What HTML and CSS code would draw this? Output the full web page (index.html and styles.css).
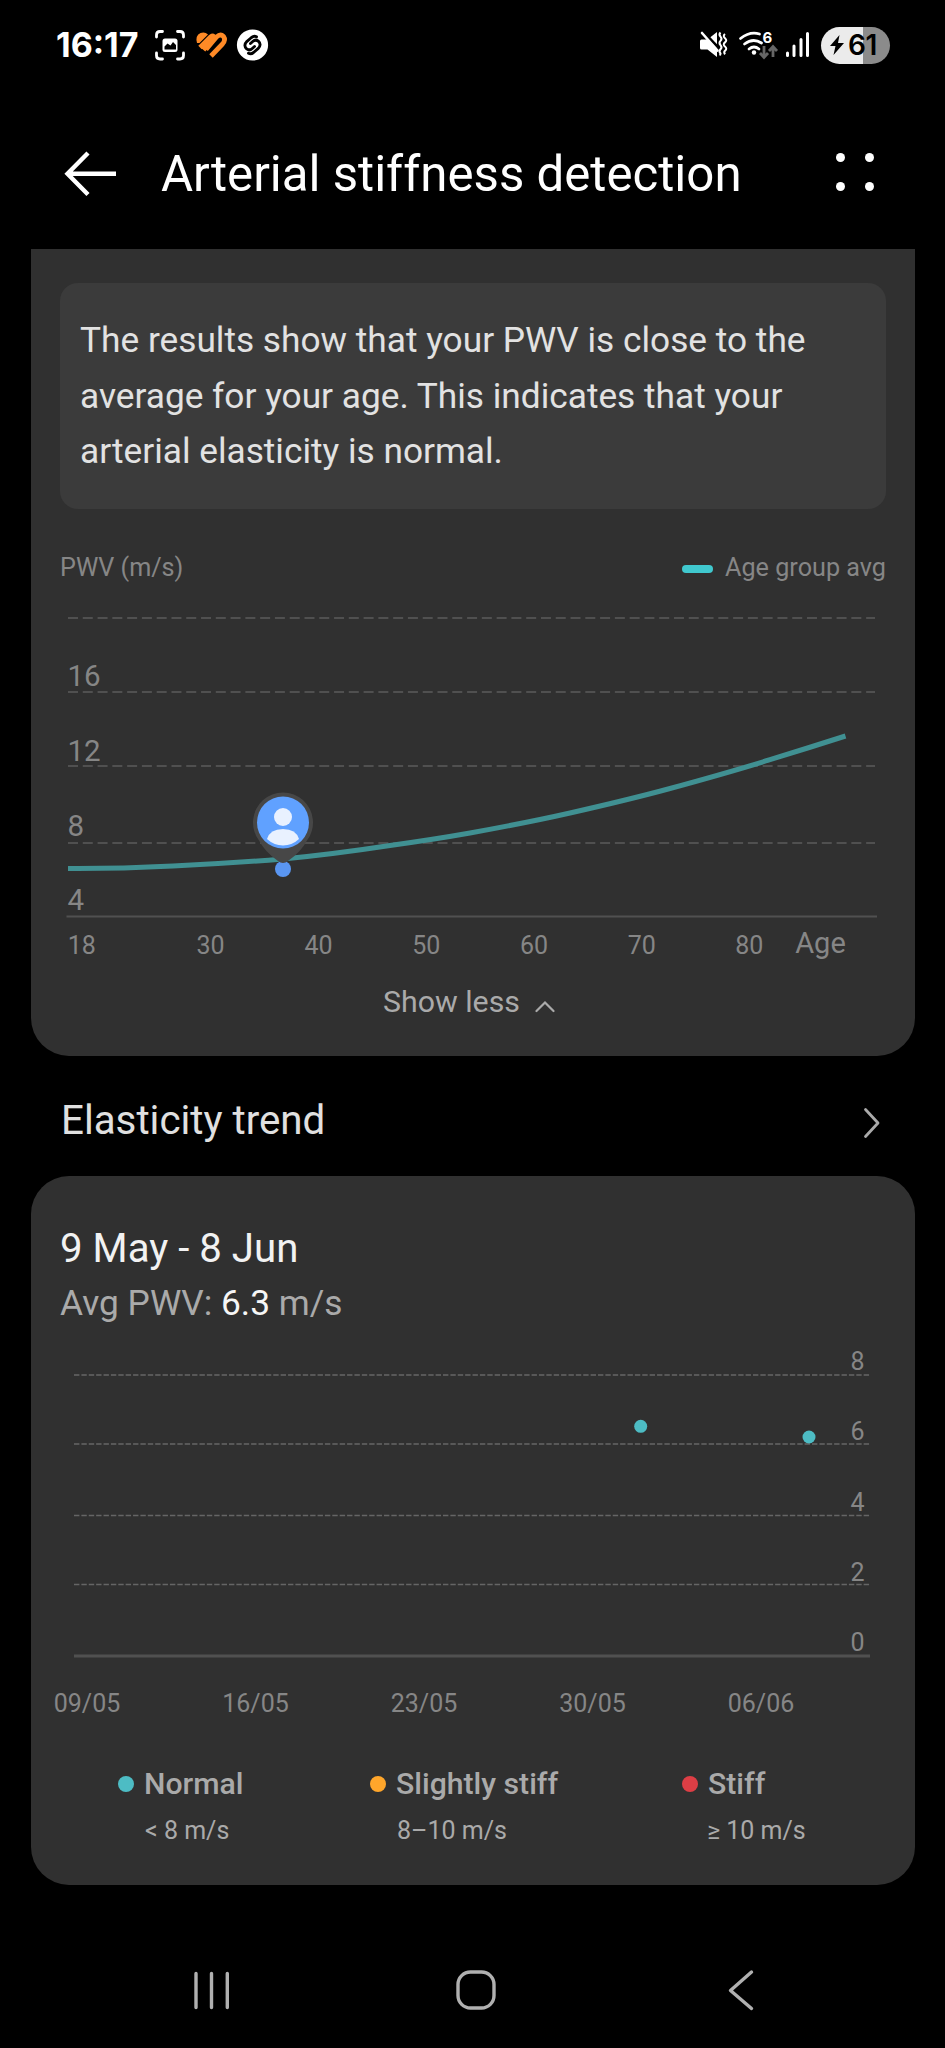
FILE: index.html
```html
<!DOCTYPE html>
<html lang="en">
<head>
<meta charset="utf-8">
<title>Arterial stiffness detection</title>
<link rel="stylesheet" href="styles.css">
</head>
<body>
<div class="screen">
  <div class="status">
    <span class="clock">16:17</span>
    <svg class="notif" width="120" height="36" viewBox="150 27 120 36" aria-hidden="true">
      <g fill="none" stroke="#fff" stroke-width="2.8" stroke-linecap="round">
        <path d="M156.500 37v-2q0-3.500 3.500-3.500h2.500M177.500 31.500h2.500q3.500 0 3.500 3.500v2M183.500 53v2.500q0 3.500-3.500 3.500h-2.500M162.500 59H160q-3.500 0-3.500-3.500V53"/>
      </g>
      <rect x="162.500" y="38.500" width="15" height="13.500" rx="2.500" fill="#fff"/>
      <path d="M164.500 49.500v-3l3-3 3 2 2.500-3.500 3 3v4.500z" fill="#000"/>
      <path d="M197 43Q195 35.500 200.500 33q4.500-1.500 7.500 1.500L199.500 43z" fill="#ff8a26"/>
      <g fill="none" stroke="#ff8a26" stroke-width="4.800" stroke-linejoin="round">
        <path d="M200 47.500l10.500-10.500q3.500-2.500 4 1L203.500 50"/>
        <path d="M206 49.500L216.500 37q4-3.500 7-.5 2.500 3.500-1 7.500L211 56"/>
      </g>
      <circle cx="252.500" cy="45" r="15.600" fill="#fff"/>
      <g fill="none" stroke="#000" stroke-width="2.900" stroke-linecap="round" stroke-linejoin="round">
        <path d="M256.500 36.800Q254 35.500 251.500 37.500L247 41.300Q243 45.500 246.700 48.800 249.500 51 252 48.700L254.500 46.500"/>
        <path d="M248.500 53.200Q251 54.500 253.500 52.500L258 48.700Q262 44.500 258.300 41.200 255.500 39 253 41.300L250.500 43.500"/>
      </g>
    </svg>
    <svg class="signals" width="112" height="36" viewBox="698 27 112 36" aria-hidden="true">
      <path d="M700 41q0-1.500 1.500-1.500h6L717 32v25l-9.500-7.500h-6Q700 49.500 700 48z" fill="#fff"/>
      <path d="M702.500 31L719 48.500" stroke="#000" stroke-width="3"/>
      <path d="M702 33l15.500 17.500" stroke="#fff" stroke-width="2.600" stroke-linecap="round"/>
      <path d="M720.500 32.500q-2 2 0 4.200t0 4.200q-2 2 0 4.200t0 4.200q-2 2 0 4.200l-.5 2M725 34q-2.500 2 0 4.200t0 4.200q-2.500 2 0 4.200t0 4.200q-1.500 1.500 0 3.500" fill="none" stroke="#fff" stroke-width="2"/>
      <g fill="none" stroke="#fff" stroke-width="2.800" stroke-linecap="round">
        <path d="M740.500 38.500q9.500-7.500 19-4.500M744.500 44q8.500-6.500 17-1M749 49q5-4 10 0"/>
      </g>
      <circle cx="754" cy="52.500" r="2.200" fill="#fff"/>
      <text class="wifi-gen" x="762.500" y="42.500">6</text>
      <g fill="none" stroke="#666" stroke-width="2.800">
        <path d="M764 46v10.500M760 53l4 4.500 4-4.500M773 57V47M769 51l4-4.500 4 4.500"/>
      </g>
      <g stroke="#fff" stroke-width="3" stroke-linecap="round">
        <path d="M787.500 53v2.500M794 46v9.500M801 39.500v16M807.500 33.500v22"/>
      </g>
    </svg>
    <div class="battery">
      <svg width="14" height="20" viewBox="0 0 14 20" aria-hidden="true"><path d="M9.500 0L0 11h5.500L3.500 20 14 8H8z" fill="#000"/></svg>
      <span>61</span>
    </div>
  </div>

  <div class="appbar">
    <svg class="back" width="54" height="50" viewBox="63 149 54 50" aria-label="Back">
      <path d="M88 153L67.500 173.800 88 194.500M67.500 173.800H116" fill="none" stroke="#fff" stroke-width="4.400"/>
    </svg>
    <h1 class="title">Arterial stiffness detection</h1>
    <div class="more"><i></i><i></i><i></i><i></i></div>
  </div>

  <section class="card result">
    <p class="message">The results show that your PWV is close to the<br>average for your age. This indicates that your<br>arterial elasticity is normal.</p>
    <div class="chart-head">
      <span>PWV (m/s)</span>
      <span class="key"><i></i>Age group avg</span>
    </div>
    <svg class="chart" width="884" height="385" viewBox="31 590 884 385">
      <g class="grid">
        <path d="M68 618H875M68 692H875M68 766H875M68 843H875"/>
      </g>
      <path class="axis" d="M66.500 916.500H877"/>
      <g class="ylabels">
        <text x="67.500" y="686">16</text>
        <text x="67.500" y="761">12</text>
        <text x="67.500" y="835.500">8</text>
        <text x="67.500" y="909.500">4</text>
      </g>
      <path class="avg" d="M68 868.500C102 868.700 137 867.800 173 866C210 864.300 246 862 283 859C319 855.500 354 851 390 845.500C417 841.700 443 837.800 470 833C503 827 537 820.500 570 813C603 805.500 637 797.500 670 788.500C703 779.500 737 770 770 759.700Q808 748 845.500 736"/>
      <circle cx="283" cy="869" r="8" fill="#5a96f2"/>
      <path d="M278 861Q265 852 259 840.500A30 30 0 1 1 307 840.500Q301 852 288 861Q283 865 278 861Z" fill="#474747"/>
      <circle cx="283" cy="822.500" r="26" fill="#60a1ff"/>
      <circle cx="283" cy="817" r="9" fill="#e9f1ff"/>
      <path d="M267 839Q270 829 283 829T299 839Q292 845.500 283 845.500T267 839Z" fill="#e9f1ff"/>
      <g class="xlabels">
        <text x="81.800" y="954">18</text>
        <text x="210.500" y="954">30</text>
        <text x="318.500" y="954">40</text>
        <text x="426.300" y="954">50</text>
        <text x="534" y="954">60</text>
        <text x="641.800" y="954">70</text>
        <text x="749.300" y="954">80</text>
        <text class="unit" x="820.500" y="952.700">Age</text>
      </g>
    </svg>
    <div class="toggle">
      <span>Show less</span>
      <svg width="20" height="13" viewBox="0 0 20 13" aria-hidden="true"><path d="M1.500 11L10 2.500 18.500 11" fill="none" stroke="#aaa" stroke-width="2.200" stroke-linecap="round"/></svg>
    </div>
  </section>

  <div class="section-head">
    <h2>Elasticity trend</h2>
    <svg width="18" height="32" viewBox="0 0 18 32" aria-hidden="true"><path d="M2.500 2.500L15 16 2.500 29.500" fill="none" stroke="#aaa" stroke-width="2.800" stroke-linecap="round" stroke-linejoin="round"/></svg>
  </div>

  <section class="card trend">
    <h3 class="range">9 May - 8 Jun</h3>
    <p class="average">Avg PWV: <b>6.3</b> m/s</p>
    <svg class="chart" width="884" height="380" viewBox="31 1345 884 380">
      <path class="fine-grid" d="M74 1375H870M74 1444H870M74 1515.500H870M74 1584.500H870"/>
      <path class="axis strong" d="M74 1656H870"/>
      <g class="xlabels">
        <text x="857.500" y="1370">8</text>
        <text x="857.500" y="1440.400">6</text>
        <text x="857.500" y="1511">4</text>
        <text x="857.500" y="1581">2</text>
        <text x="857.500" y="1651.400">0</text>
        <text x="87" y="1712">09/05</text>
        <text x="255.500" y="1712">16/05</text>
        <text x="424" y="1712">23/05</text>
        <text x="592.500" y="1712">30/05</text>
        <text x="761" y="1712">06/06</text>
      </g>
      <g fill="#4dbcc4">
        <circle cx="640.700" cy="1426.300" r="6.500"/>
        <circle cx="809" cy="1437" r="6.500"/>
      </g>
    </svg>
    <div class="legend">
      <div class="level normal"><i></i><strong>Normal</strong><small>&lt; 8 m/s</small></div>
      <div class="level slight"><i></i><strong>Slightly stiff</strong><small>8–10 m/s</small></div>
      <div class="level stiff"><i></i><strong>Stiff</strong><small>≥ 10 m/s</small></div>
    </div>
  </section>

  <div class="navbar">
    <svg width="38" height="42" viewBox="192 1969 38 42" aria-label="Recents"><path d="M196 1973.500V2007.500M211.500 1973.500V2007.500M227.300 1973.500V2007.500" stroke="#b0b0b0" stroke-width="3.400" stroke-linecap="round"/></svg>
    <svg class="home" width="42" height="42" viewBox="0 0 42 42" aria-label="Home"><rect x="3" y="3" width="36" height="36" rx="12.500" fill="none" stroke="#b0b0b0" stroke-width="3.400"/></svg>
    <svg width="28" height="42" viewBox="0 0 28 42" aria-label="Back"><path d="M24.500 3L3.500 21.500 24.500 39.500" fill="none" stroke="#b0b0b0" stroke-width="3.400" stroke-linecap="round" stroke-linejoin="round"/></svg>
  </div>
</div>
</body>
</html>
```

FILE: styles.css
```css
* { box-sizing: border-box; margin: 0; padding: 0; }

body {
  background: #000;
  color: #e2e2e2;
  font-family: Roboto, "Noto Sans", sans-serif;
}

.screen {
  width: 945px;
  height: 2048px;
  display: flex;
  flex-direction: column;
  overflow: hidden;
}

svg { display: block; flex: none; }

/* Status bar */
.status {
  height: 90px;
  padding: 0 55px 0 56px;
  display: flex;
  align-items: center;
}
.clock {
  width: 94px;
  font: 700 34px/40px Inter, Roboto, sans-serif;
  color: #fff;
  white-space: nowrap;
}
.signals { margin-left: auto; }
.wifi-gen { font: 700 15px Inter, sans-serif; fill: #fff; }
.battery {
  width: 69px;
  height: 37px;
  margin-left: 11px;
  padding-left: 9px;
  display: flex;
  align-items: center;
  gap: 4px;
  border-radius: 19px;
  background: linear-gradient(90deg, #ebebeb 42px, #8b8b8b 42px);
  color: #000;
  font: 600 28px/37px Inter, Roboto, sans-serif;
  letter-spacing: -0.500px;
}

/* App bar */
.appbar {
  height: 159px;
  padding: 9px 71px 0 63px;
  display: flex;
  align-items: center;
}
.title {
  margin-left: 44px;
  font-size: 49.200px;
  line-height: 56px;
  font-weight: 400;
  color: #fff;
  white-space: nowrap;
}
.more {
  margin: -5px 0 0 auto;
  display: grid;
  grid-template-columns: 9px 9px;
  gap: 20px;
}
.more i { height: 9px; border-radius: 50%; background: #fff; }

/* Cards */
.card {
  width: 884px;
  margin-left: 31px;
  background: #303030;
  border-radius: 38px;
  display: flex;
  flex-direction: column;
}
.result {
  height: 807px;
  padding-top: 34px;
  border-radius: 0 0 38px 38px;
}
.message {
  height: 226px;
  margin: 0 29px;
  padding: 30px 20px;
  border-radius: 18px;
  background: #3b3b3b;
  font-size: 35.250px;
  line-height: 55.600px;
  white-space: nowrap;
}
.chart-head {
  height: 32px;
  margin: 43px 29px 6px;
  display: flex;
  align-items: center;
  justify-content: space-between;
  font-size: 25.200px;
  line-height: 32px;
  color: #868686;
}
.key { display: flex; align-items: center; gap: 12px; }
.key i { width: 31px; height: 8px; margin-top: 1px; border-radius: 4px; background: #40c8ce; }

.chart text { font-family: Roboto, sans-serif; fill: #868686; }
.grid { fill: none; stroke: #505050; stroke-width: 2.200; stroke-dasharray: 10 4.780; }
.fine-grid { fill: none; stroke: #656565; stroke-width: 1.600; stroke-dasharray: 5.400 1.980; }
.axis { stroke: #505050; stroke-width: 2.200; }
.axis.strong { stroke-width: 2.800; }
.avg { fill: none; stroke: #409092; stroke-width: 5; }
.ylabels text { font-size: 29.500px; }
.xlabels text { font-size: 25px; text-anchor: middle; }
.chart .unit { font-size: 29px; }

.toggle {
  height: 36px;
  margin-top: 9px;
  padding-left: 352px;
  display: flex;
  align-items: center;
  gap: 15px;
  font-size: 30.300px;
  line-height: 36px;
  color: #aaa;
}
.toggle svg { margin-top: 9px; }

.section-head {
  height: 120px;
  padding: 10px 64px 0 61px;
  display: flex;
  align-items: center;
  justify-content: space-between;
}
.section-head svg { margin-top: 3px; }
.section-head h2 {
  font-size: 40.300px;
  line-height: 48px;
  font-weight: 400;
  color: #e0e0e0;
}

.trend { height: 709px; padding-top: 49px; }
.range {
  margin-left: 29px;
  font-size: 40.200px;
  line-height: 48px;
  font-weight: 400;
  color: #f2f2f2;
}
.average {
  margin: 9px 0 20px 29px;
  font-size: 35.300px;
  line-height: 43px;
  color: #aaa;
}
.average b { font-weight: 400; color: #f6f6f6; }

.legend {
  margin-top: 36px;
  padding-left: 87px;
  display: grid;
  grid-template-columns: 252px 312px auto;
}
.level {
  display: grid;
  grid-template-columns: 16px auto;
  column-gap: 10px;
  row-gap: 9px;
  align-items: center;
  color: #aaa;
}
.level i { width: 16px; height: 16px; border-radius: 50%; }
.level strong { font-size: 30.200px; line-height: 46px; font-weight: 500; }
.level small { grid-column: 2; padding-left: 1px; font-size: 25px; line-height: 30px; }
.stiff small { margin-left: -2px; }
.normal i { background: #4dbcc4; }
.slight i { background: #ffa62b; }
.stiff i { background: #dd3e45; }

/* System navigation */
.navbar {
  height: 163px;
  padding: 84px 190px 0 192px;
  display: flex;
  align-items: flex-start;
  justify-content: space-between;
}
.home { margin-right: 5px; }
```
